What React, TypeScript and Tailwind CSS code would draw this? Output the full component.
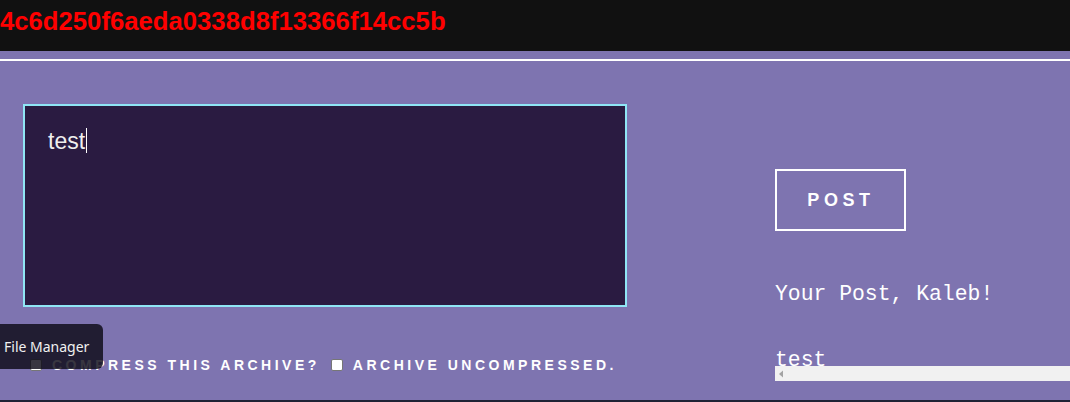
import React from "react";

export default function App() {
  return (
    <div className="relative w-full h-[402px] overflow-hidden bg-[#1f2235] flex flex-col">
      <div className="h-[51px] bg-[#111111] pt-[6px] shrink-0">
        <div className="text-[25.7px] leading-[30px] font-bold text-[#ff0000] whitespace-nowrap" style={{ fontFamily: '"Liberation Sans", Arial, sans-serif' }}>
          4c6d250f6aeda0338d8f13366f14cc5b
        </div>
      </div>
      <div className="h-[349px] bg-[#7e74b0] pt-[8px] shrink-0 flex flex-col">
        <div className="h-[2px] bg-white" />
        <div className="flex flex-row pl-[23px]">
          <div className="w-[604px] shrink-0 flex flex-col">
            <div className="mt-[43px] h-[203px] border-2 border-[#8fe6f5] bg-[#2a1b41] pl-[23px] pt-[22px]">
              <div className="flex items-start text-[23px] leading-[26px] text-[#eeeeee]" style={{ fontFamily: '"Liberation Sans", Arial, sans-serif' }}>
                <span>test</span>
                <span className="ml-[1px] w-[1px] h-[25px] bg-white" />
              </div>
            </div>
            <div className="mt-[50px] pl-[7px] flex items-center text-[14px] leading-[16px] font-bold text-white tracking-[3.5px] whitespace-nowrap" style={{ fontFamily: '"Liberation Sans", Arial, sans-serif' }}>
              <span className="w-[12px] h-[12px] bg-white border border-[#767676] rounded-[2px] shrink-0" />
              <span className="ml-[10px]">COMPRESS THIS ARCHIVE?</span>
              <span className="ml-[11px] w-[12px] h-[12px] bg-white border border-[#767676] rounded-[2px] shrink-0" />
              <span className="ml-[10px]">ARCHIVE UNCOMPRESSED.</span>
            </div>
          </div>
          <div className="ml-[148px] flex-1 flex flex-col">
            <div className="mt-[108px] w-[131px] h-[62px] border-2 border-white flex items-center justify-center">
              <span className="text-[18px] leading-[20px] font-bold text-white tracking-[4.6px] pl-[1px]" style={{ fontFamily: '"Liberation Sans", Arial, sans-serif' }}>
                POST
              </span>
            </div>
            <div className="mt-[51px] text-[21.4px] leading-[24px] text-white whitespace-nowrap" style={{ fontFamily: '"Liberation Mono", "Courier New", monospace' }}>
              Your Post, Kaleb!
            </div>
            <div className="mt-[42px] h-[18px] text-[21.4px] leading-[24px] text-white whitespace-nowrap" style={{ fontFamily: '"Liberation Mono", "Courier New", monospace' }}>
              test
            </div>
            <div className="h-[15px] bg-[#f1f1f1] flex items-center pl-[3px]">
              <svg width="6" height="8" viewBox="0 0 6 8">
                <path d="M1 4 L5 0.5 L5 7.5 Z" fill="#a3a3a3" />
              </svg>
            </div>
          </div>
        </div>
      </div>
      <div className="absolute left-0 top-[324px] w-[103px] h-[45px] rounded-r-[6px] bg-[rgba(12,10,22,0.82)] flex items-center pl-[4px]">
        <span className="text-[14px] leading-[19px] text-[#f0f0f0] whitespace-nowrap" style={{ fontFamily: '"Noto Sans", "DejaVu Sans", sans-serif' }}>
          File Manager
        </span>
      </div>
    </div>
  );
}
